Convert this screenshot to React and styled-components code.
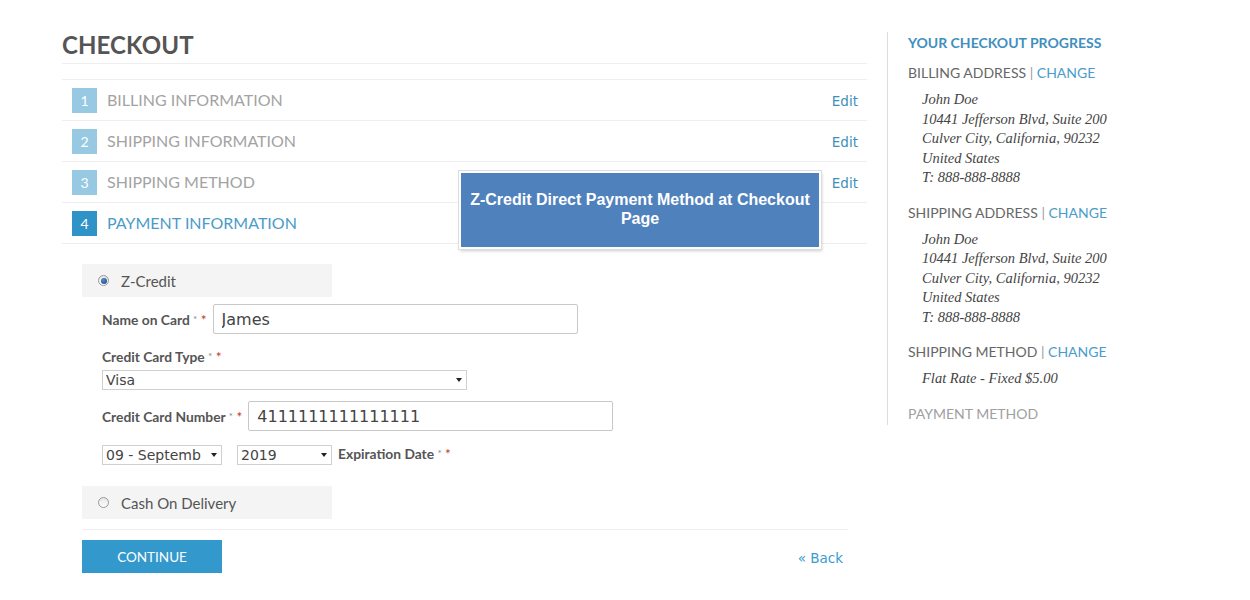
import React from 'react';
import styled, { createGlobalStyle } from 'styled-components';

const GlobalStyle = createGlobalStyle`
  body {
    margin: 0;
    background: #fff;
    font-family: Lato, 'Open Sans', sans-serif;
    color: #555;
  }
`;

const steps = [
  { n: 1, title: 'BILLING INFORMATION', edit: true },
  { n: 2, title: 'SHIPPING INFORMATION', edit: true },
  { n: 3, title: 'SHIPPING METHOD', edit: true },
  { n: 4, title: 'PAYMENT INFORMATION', active: true },
];

const address = [
  'John Doe',
  '10441 Jefferson Blvd, Suite 200',
  'Culver City, California, 90232',
  'United States',
  'T: 888-888-8888',
];

export default function App() {
  return (
    <>
      <GlobalStyle />
      <Page>
        <Main>
          <Title>CHECKOUT</Title>
          <Steps>
            {steps.map((s) => (
              <Step key={s.n}>
                <StepNum active={s.active}>{s.n}</StepNum>
                <StepTitle active={s.active}>{s.title}</StepTitle>
                {s.edit && <EditLink>Edit</EditLink>}
              </Step>
            ))}
          </Steps>

          <Payment>
            <MethodBox>
              <Radio checked />
              <MethodLabel>Z-Credit</MethodLabel>
            </MethodBox>

            <Fields>
              <InlineRow>
                <Label>
                  Name on Card <Star>*</Star> <Req>*</Req>
                </Label>
                <TextInput width={365} defaultValue="James" />
              </InlineRow>

              <StackRow>
                <Label>
                  Credit Card Type <Star>*</Star> <Req>*</Req>
                </Label>
                <SelectBox width={365}>
                  <span>Visa</span>
                  <Caret />
                </SelectBox>
              </StackRow>

              <InlineRow top={11}>
                <Label>
                  Credit Card Number <Star>*</Star> <Req>*</Req>
                </Label>
                <TextInput width={365} defaultValue="4111111111111111" />
              </InlineRow>

              <ExpiryRow>
                <SelectBox width={120}>
                  <span>09 - Septemb</span>
                  <Caret />
                </SelectBox>
                <SelectBox width={95}>
                  <span>2019</span>
                  <Caret />
                </SelectBox>
                <Label>
                  Expiration Date <Star>*</Star> <Req>*</Req>
                </Label>
              </ExpiryRow>
            </Fields>

            <MethodBox>
              <Radio />
              <MethodLabel>Cash On Delivery</MethodLabel>
            </MethodBox>

            <Actions>
              <ContinueButton>CONTINUE</ContinueButton>
              <BackLink>« Back</BackLink>
            </Actions>
          </Payment>

          <Callout>
            Z-Credit Direct Payment Method at Checkout
            <br />
            Page
          </Callout>
        </Main>

        <Sidebar>
          <SideTitle>YOUR CHECKOUT PROGRESS</SideTitle>

          <SideHead>
            BILLING ADDRESS <Pipe>|</Pipe> <Change>CHANGE</Change>
          </SideHead>
          <Address>
            {address.map((l) => (
              <div key={l}>{l}</div>
            ))}
          </Address>

          <SideHead>
            SHIPPING ADDRESS <Pipe>|</Pipe> <Change>CHANGE</Change>
          </SideHead>
          <Address>
            {address.map((l) => (
              <div key={l}>{l}</div>
            ))}
          </Address>

          <SideHead>
            SHIPPING METHOD <Pipe>|</Pipe> <Change>CHANGE</Change>
          </SideHead>
          <Address>
            <div>Flat Rate - Fixed $5.00</div>
          </Address>

          <SideHead muted>PAYMENT METHOD</SideHead>
        </Sidebar>
      </Page>
    </>
  );
}

// Styled components

const Page = styled.div`
  display: flex;
  align-items: flex-start;
  padding: 32px 0 0 62px;
`;

const Main = styled.div`
  position: relative;
  width: 805px;
`;

const Title = styled.h1`
  margin: 0;
  padding: 0 0 6px;
  font-size: 24px;
  line-height: 25px;
  font-weight: 700;
  color: #555;
  letter-spacing: 0.1px;
  border-bottom: 1px solid #eee;
`;

const Steps = styled.div`
  margin-top: 15px;
  border-top: 1px solid #eee;
`;

const Step = styled.div`
  display: flex;
  align-items: center;
  height: 40px;
  padding: 0 10px;
  border-bottom: 1px solid #eee;
`;

const StepNum = styled.span`
  display: flex;
  align-items: center;
  justify-content: center;
  width: 25px;
  height: 25px;
  font-size: 14px;
  color: #fff;
  background: ${(p) => (p.active ? '#2f93c8' : '#97c9e3')};
`;

const StepTitle = styled.span`
  flex: 1;
  margin-left: 10px;
  margin-top: -1px;
  font-size: 16px;
  font-weight: 400;
  color: ${(p) => (p.active ? '#4b9bc8' : '#a3a3a3')};
`;

const EditLink = styled.a`
  margin-right: -1px;
  margin-top: 1px;
  font-family: 'DejaVu Sans', sans-serif;
  font-size: 13.5px;
  color: #3d90b8;
  cursor: pointer;
`;

const Payment = styled.div`
  padding: 20px 19px 0 20px;
`;

const MethodBox = styled.div`
  display: flex;
  align-items: center;
  width: 250px;
  height: 33px;
  padding-left: 16px;
  box-sizing: border-box;
  background: #f4f4f4;
`;

const Radio = styled.span`
  position: relative;
  width: 11px;
  height: 11px;
  border-radius: 50%;
  border: 1px solid #999;
  background: linear-gradient(#e6e6e6, #fdfdfd);
  box-sizing: border-box;

  &::after {
    content: '';
    display: ${(p) => (p.checked ? 'block' : 'none')};
    position: absolute;
    left: 1.5px;
    top: 1.5px;
    width: 6px;
    height: 6px;
    border-radius: 50%;
    background: radial-gradient(circle at 40% 35%, #5a8fd0, #123a78);
  }
`;

const MethodLabel = styled.span`
  margin-left: 12px;
  font-size: 15px;
  color: #555;
`;

const Fields = styled.div`
  padding: 7px 0 21px 20px;
`;

const InlineRow = styled.div`
  display: flex;
  align-items: center;
  gap: 6px;
  margin-top: ${(p) => (p.top || 0)}px;
`;

const StackRow = styled.div`
  display: flex;
  flex-direction: column;
  gap: 5px;
  margin-top: 14px;
`;

const ExpiryRow = styled.div`
  display: flex;
  align-items: center;
  gap: 15px;
  margin-top: 14px;

  & > span:last-child {
    margin-left: -9px;
    margin-top: -4px;
  }
`;

const Label = styled.span`
  font-size: 13.8px;
  font-weight: 700;
  color: #555;
`;

const Star = styled.span`
  font-size: 10px;
  font-weight: 400;
  color: #888;
  vertical-align: 2px;
`;

const Req = styled.span`
  color: #c0392b;
  font-weight: 400;
`;

const TextInput = styled.input`
  width: ${(p) => p.width}px;
  height: 30px;
  box-sizing: border-box;
  padding: 0 8px;
  border: 1px solid #c8c8c8;
  border-radius: 2px;
  font-family: 'DejaVu Sans', Verdana, sans-serif;
  font-size: 16px;
  color: #444;
  outline: none;
`;

const SelectBox = styled.div`
  display: flex;
  align-items: center;
  justify-content: space-between;
  width: ${(p) => p.width}px;
  height: 20px;
  box-sizing: border-box;
  padding: 0 4px 0 3px;
  border: 1px solid #d0d0d0;
  font-family: 'DejaVu Sans', Verdana, sans-serif;
  font-size: 14px;
  color: #444;
  background: #fff;
  white-space: nowrap;
  overflow: hidden;
`;

const Caret = styled.span`
  flex: none;
  width: 0;
  height: 0;
  border-left: 3.5px solid transparent;
  border-right: 3.5px solid transparent;
  border-top: 4px solid #222;
`;

const Actions = styled.div`
  display: flex;
  align-items: center;
  justify-content: space-between;
  margin-top: 10px;
  padding: 10px 5px 0 0;
  border-top: 1px solid #eee;
`;

const ContinueButton = styled.button`
  width: 140px;
  height: 33px;
  border: none;
  background: #3399cc;
  color: #fff;
  font-family: Lato, sans-serif;
  font-size: 13.5px;
  cursor: pointer;
`;

const BackLink = styled.a`
  margin-top: 2px;
  font-family: 'DejaVu Sans', sans-serif;
  font-size: 13.5px;
  color: #3a9bd0;
  cursor: pointer;
`;

const Callout = styled.div`
  position: absolute;
  left: 397px;
  top: 139px;
  width: 362px;
  height: 78px;
  box-sizing: border-box;
  padding-top: 17px;
  background: #4f81bd;
  border: 2px solid #fff;
  box-shadow: 0 0 0 1px #ddd, 1px 2px 3px rgba(0, 0, 0, 0.2);
  text-align: center;
  font-family: 'Liberation Sans', Arial, sans-serif;
  font-weight: 700;
  font-size: 16px;
  line-height: 19px;
  color: #fff;
`;

const Sidebar = styled.aside`
  margin-left: 20px;
  width: 300px;
  height: 391px;
  padding: 2px 0 0 20px;
  border-left: 1px solid #ddd;
`;

const SideTitle = styled.div`
  font-size: 14px;
  font-weight: 700;
  line-height: 18px;
  color: #3f8fbf;
`;

const SideHead = styled.div`
  margin-top: 12px;
  font-size: 14px;
  line-height: 18px;
  color: ${(p) => (p.muted ? '#a0a0a0' : '#666')};
`;

const Pipe = styled.span`
  color: #999;
`;

const Change = styled.span`
  color: #4a9ccb;
`;

const Address = styled.div`
  padding: 8px 0 4px 14px;
  font-family: 'Liberation Serif', 'DejaVu Serif', serif;
  font-style: italic;
  font-size: 14.5px;
  line-height: 19.5px;
  color: #444;
`;
